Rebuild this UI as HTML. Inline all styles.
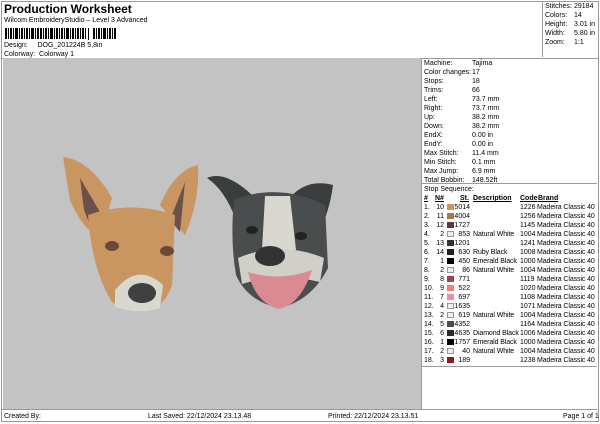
<!DOCTYPE html><html><head><style>
body{margin:0;width:600px;height:424px;background:#fff;position:relative;font-family:"Liberation Sans",sans-serif;color:#000;overflow:hidden}
.a{position:absolute;white-space:nowrap}
.s{font-size:7px;line-height:9px}
.sw div{box-sizing:border-box;height:6px;margin-bottom:3px}
.w{border:1px solid #999;background:#eee}
</style></head><body>
<div class="a" style="left:1px;top:1px;width:596px;height:56px;border:1px solid #999"></div>
<div class="a" style="left:542px;top:1px;width:55px;height:56px;border-left:1px solid #999"></div>
<div class="a" style="left:4px;top:2px;font-size:12px;font-weight:bold">Production Worksheet</div>
<div class="a s" style="left:4px;top:16px">Wilcom EmbroideryStudio – Level 3 Advanced</div>
<svg class="a" style="left:5px;top:28px" width="116" height="12"><g fill="#000">
<rect x="0" width="2" height="11"/><rect x="3" width="1" height="11"/><rect x="5" width="2" height="11"/><rect x="8" width="1" height="11"/><rect x="10" width="3" height="11"/><rect x="14" width="1" height="11"/><rect x="16" width="2" height="11"/><rect x="19" width="1" height="11"/><rect x="21" width="2" height="11"/><rect x="24" width="1" height="11"/><rect x="26" width="3" height="11"/><rect x="30" width="1" height="11"/><rect x="32" width="2" height="11"/><rect x="35" width="2" height="11"/><rect x="38" width="1" height="11"/><rect x="40" width="2" height="11"/><rect x="43" width="1" height="11"/><rect x="45" width="3" height="11"/><rect x="49" width="1" height="11"/><rect x="51" width="2" height="11"/><rect x="54" width="1" height="11"/><rect x="56" width="2" height="11"/><rect x="59" width="1" height="11"/><rect x="61" width="3" height="11"/><rect x="65" width="1" height="11"/><rect x="67" width="2" height="11"/><rect x="70" width="1" height="11"/><rect x="72" width="2" height="11"/><rect x="75" width="1" height="11"/><rect x="77" width="2" height="11"/><rect x="80" width="1" height="11"/><rect x="83" width="1" height="12" y="0"/><rect x="88" width="2" height="11"/><rect x="91" width="1" height="11"/><rect x="93" width="2" height="11"/><rect x="96" width="1" height="11"/><rect x="98" width="3" height="11"/><rect x="102" width="1" height="11"/><rect x="104" width="2" height="11"/><rect x="107" width="1" height="11"/><rect x="109" width="2" height="11"/></g></svg>
<div class="a s" style="left:4px;top:41px">Design:&nbsp;&nbsp;&nbsp;&nbsp;&nbsp;DOG_201224B 5,8in</div>
<div class="a s" style="left:4px;top:50px">Colorway:&nbsp; Colorway 1</div>
<div class="a s" style="left:545px;top:2px">Stitches:<br>Colors:<br>Height:<br>Width:<br>Zoom:</div>
<div class="a s" style="left:574px;top:2px">29184<br>14<br>3.01 in<br>5.80 in<br>1:1</div>

<div class="a" style="left:1px;top:57px;width:596px;height:364px;border:1px solid #999;border-top:0"></div>
<div class="a" style="left:3px;top:58px;width:418px;height:351px;background:#c3c3c3"></div>
<div class="a" style="left:1px;top:409px;width:596px;border-top:1px solid #999"></div>
<div class="a" style="left:421px;top:58px;height:351px;border-left:1px solid #999"></div>
<div class="a" style="left:421px;top:183px;width:176px;border-top:1px solid #999"></div>
<div class="a" style="left:421px;top:366px;width:176px;border-top:1px solid #999"></div>

<svg class="a" style="left:0;top:0" width="421" height="409">
<path d="M63,157 Q90,160 112,198 L100,240 Q80,225 70,200 Z" fill="#c99560"/>
<path d="M198,165 Q200,200 185,235 L160,205 Q175,170 198,165 Z" fill="#c99560"/>
<path d="M80,178 L100,212 L96,240 L84,210 Z" fill="#6b5149"/>
<path d="M185,182 L170,220 L180,232 Z" fill="#6b5149"/>
<path d="M88,215 Q130,200 175,215 L172,285 Q165,305 150,310 Q125,312 112,302 Q92,270 88,215 Z" fill="#c99560"/>
<path d="M115,290 Q138,262 163,285 L160,308 Q140,315 115,307 Z" fill="#d8d8d0"/>
<ellipse cx="142" cy="293" rx="14" ry="10" fill="#404040"/>
<ellipse cx="112" cy="246" rx="7" ry="5" fill="#6a4a35"/><ellipse cx="167" cy="251" rx="7" ry="5" fill="#6a4a35"/>
<path d="M207,178 Q225,170 252,195 L236,220 Q225,190 207,178 Z" fill="#3a3d3d"/>
<path d="M333,185 Q305,178 288,200 L318,235 Q330,210 333,185 Z" fill="#3a3d3d"/>
<path d="M234,200 Q278,182 325,205 L328,268 Q312,300 280,308 Q248,302 236,275 Q230,240 234,200 Z" fill="#4a4d4d"/>
<path d="M265,196 L290,196 L296,250 Q280,258 262,250 Z" fill="#d8d8d0"/>
<path d="M238,258 Q280,240 324,258 L320,282 Q280,272 242,284 Z" fill="#d0d0c8"/>
<ellipse cx="270" cy="256" rx="15" ry="10" fill="#333"/>
<path d="M248,272 Q280,282 312,270 Q300,306 278,309 Q255,302 248,272 Z" fill="#d98a92"/>
<ellipse cx="252" cy="230" rx="6" ry="4" fill="#222"/><ellipse cx="301" cy="236" rx="6" ry="4" fill="#222"/>
</svg>

<div class="a s" style="left:424px;top:59px">Machine:<br>Color changes:<br>Stops:<br>Trims:<br>Left:<br>Right:<br>Up:<br>Down:<br>EndX:<br>EndY:<br>Max Stitch:<br>Min Stitch:<br>Max Jump:<br>Total Bobbin:</div>
<div class="a s" style="left:472px;top:59px">Tajima<br>17<br>18<br>66<br>73.7 mm<br>73.7 mm<br>38.2 mm<br>38.2 mm<br>0.00 in<br>0.00 in<br>11.4 mm<br>0.1 mm<br>6.9 mm<br>148.52ft</div>
<div class="a s" style="left:424px;top:185px">Stop Sequence:</div>
<div class="a s" style="left:424px;top:194px;font-weight:bold;text-decoration:underline">#</div>
<div class="a s" style="left:435px;top:194px;font-weight:bold;text-decoration:underline">N#</div>
<div class="a s" style="left:460px;top:194px;font-weight:bold;text-decoration:underline">St.</div>
<div class="a s" style="left:473px;top:194px;font-weight:bold;text-decoration:underline">Description</div>
<div class="a s" style="left:520px;top:194px;font-weight:bold;text-decoration:underline">Code</div>
<div class="a s" style="left:538px;top:194px;font-weight:bold;text-decoration:underline">Brand</div>
<div class="a s" style="left:424px;top:203px">1.<br>2.<br>3.<br>4.<br>5.<br>6.<br>7.<br>8.<br>9.<br>10.<br>11.<br>12.<br>13.<br>14.<br>15.<br>16.<br>17.<br>18.</div>
<div class="a s" style="left:434px;top:203px;width:10px;text-align:right">10<br>11<br>12<br>2<br>13<br>14<br>1<br>2<br>8<br>9<br>7<br>4<br>2<br>5<br>6<br>1<br>2<br>3</div>
<div class="a sw" style="left:447px;top:204px;width:7px">
<div style="background:#d9925e"></div><div style="background:#a87850"></div><div style="background:#5a3a3a"></div><div class="w"></div><div style="background:#333"></div><div style="background:#222"></div><div style="background:#000"></div><div class="w"></div><div style="background:#a0405a"></div><div style="background:#f08070"></div><div style="background:#e890a8"></div><div class="w"></div><div class="w"></div><div style="background:#4a4c50"></div><div style="background:#2a2a2a"></div><div style="background:#000"></div><div class="w"></div><div style="background:#8a1a2a"></div></div>
<div class="a s" style="left:452px;top:203px;width:18px;text-align:right">5014<br>4004<br>1727<br>853<br>1201<br>630<br>450<br>86<br>771<br>522<br>697<br>1635<br>619<br>4352<br>4635<br>1757<br>40<br>189</div>
<div class="a s" style="left:473px;top:203px;letter-spacing:-0.1px"><br><br><br>Natural White<br><br>Ruby Black<br>Emerald Black<br>Natural White<br><br><br><br><br>Natural White<br><br>Diamond Black<br>Emerald Black<br>Natural White<br></div>
<div class="a s" style="left:520px;top:203px">1226<br>1256<br>1145<br>1004<br>1241<br>1008<br>1000<br>1004<br>1119<br>1020<br>1108<br>1071<br>1004<br>1164<br>1006<br>1000<br>1004<br>1238</div>
<div class="a s" style="left:537px;top:203px;letter-spacing:-0.1px">Madeira Classic 40<br>Madeira Classic 40<br>Madeira Classic 40<br>Madeira Classic 40<br>Madeira Classic 40<br>Madeira Classic 40<br>Madeira Classic 40<br>Madeira Classic 40<br>Madeira Classic 40<br>Madeira Classic 40<br>Madeira Classic 40<br>Madeira Classic 40<br>Madeira Classic 40<br>Madeira Classic 40<br>Madeira Classic 40<br>Madeira Classic 40<br>Madeira Classic 40<br>Madeira Classic 40</div>

<div class="a s" style="left:4px;top:412px">Created By:</div>
<div class="a s" style="left:148px;top:412px">Last Saved: 22/12/2024 23.13.48</div>
<div class="a s" style="left:328px;top:412px">Printed: 22/12/2024 23.13.51</div>
<div class="a s" style="left:563px;top:412px">Page 1 of 1</div>
</body></html>
